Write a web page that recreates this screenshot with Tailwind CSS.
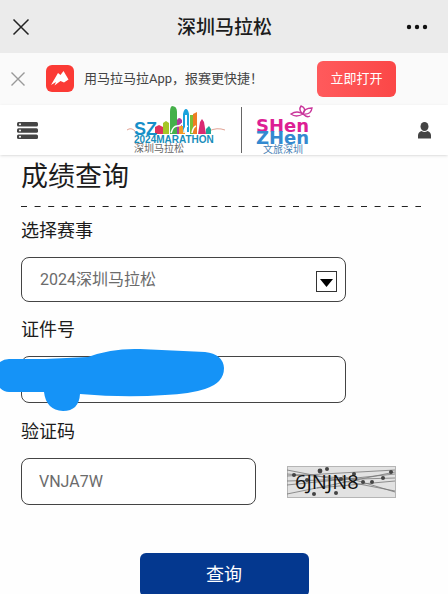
<!DOCTYPE html>
<html lang="zh-CN">
<head>
    <meta charset="UTF-8">
    <meta name="viewport" content="width=device-width, initial-scale=1.0">
    <title>深圳马拉松</title>
    <script src="https://cdn.jsdelivr.net/npm/@tailwindcss/browser@4"></script>
</head>
<body class="bg-[#fefefe] text-[#1c1c1c] font-[Roboto,'Noto_Sans_CJK_SC',sans-serif]">

    <!-- Title bar -->
    <div class="flex items-center justify-between h-[53px] pl-3 pr-[11px] bg-[#ebebeb]">
        <button aria-label="关闭" class="w-10">
            <svg class="w-[18px] h-[18px]" viewBox="0 0 18 18" fill="none" stroke="#222" stroke-width="1.5">
                <path d="M1.5 1.5l15 15M16.5 1.5l-15 15"/>
            </svg>
        </button>
        <h1 class="pt-1 text-[19px] font-medium">深圳马拉松</h1>
        <button aria-label="更多" class="flex justify-center w-10">
            <svg class="w-[22px] h-[6px]" viewBox="0 0 22 6" fill="#111">
                <circle cx="3" cy="3" r="2.2"/><circle cx="11" cy="3" r="2.2"/><circle cx="19" cy="3" r="2.2"/>
            </svg>
        </button>
    </div>

    <!-- App banner -->
    <div class="flex items-center h-[52px] pl-[11px] pr-[52px] bg-[#fafafa]">
        <button aria-label="关闭横幅">
            <svg class="w-[14px] h-[14px]" viewBox="0 0 14 14" fill="none" stroke="#999" stroke-width="1.4">
                <path d="M.5 .5l13 13M13.5 .5l-13 13"/>
            </svg>
        </button>
        <svg class="w-7 h-7 ml-[21px]" viewBox="0 0 28 28">
            <rect width="28" height="27" rx="6" fill="#fb3a35"/>
            <path d="M5 20L12 8L14.500 10L17.500 6L22.500 14.500L18 17.500L14.500 16L8.500 20.500L10 17Z" fill="#fff"/>
        </svg>
        <p class="ml-[10px] text-[13px] text-[#444]">用马拉马拉App，报赛更快捷！</p>
        <button class="w-[79px] h-9 ml-auto rounded-md bg-linear-to-r from-[#ff5a5c] to-[#fb4747] text-[13px] text-white">立即打开</button>
    </div>

    <!-- Site header -->
    <header class="flex items-center justify-between h-[50px] px-[17px] bg-white shadow-sm">
        <button aria-label="菜单" class="w-6">
            <svg class="w-[21px] h-[17px]" viewBox="0 0 21 17">
                <g fill="#444">
                    <rect width="21" height="4.600" rx="1.500"/>
                    <rect y="6.200" width="21" height="4.600" rx="1.500"/>
                    <rect y="12.400" width="21" height="4.600" rx="1.500"/>
                </g>
                <g fill="#fff">
                    <circle cx="3" cy="2.300" r="1"/><circle cx="3" cy="8.500" r="1"/><circle cx="3" cy="14.700" r="1"/>
                </g>
            </svg>
        </button>
        <div class="flex items-center">
            <svg class="w-[100px] h-[50px]" viewBox="0 0 100 50" role="img" aria-label="2024深圳马拉松">
                <path d="M0 25q4-3 8 1M82 26q8-4 16-1" fill="none" stroke="#d98a78" stroke-width=".8"/>
                <!-- Skyline -->
                <path d="M28 29v-7l4-2 4 2v7z" fill="#e0335c"/>
                <path d="M36 29V18l3-2 3 2v11z" fill="#a6c626"/>
                <path d="M43 29V7q0-5 2-6q5 0 5 6v22z" fill="#45b04a"/>
                <path d="M50 29V15q2-4 5 0v14z" fill="#b0399b"/>
                <path d="M52 29v-8h6v8z" fill="#f39a26"/>
                <path d="M56 27V9q1-5 3-5t3 5v18h-2V10h-2v17z" fill="#1aa3dd"/>
                <path d="M63 29V10h3v19z" fill="#7abf35"/>
                <path d="M66 29V9l4-2v22z" fill="#ef7d24"/>
                <path d="M71 29l2-12 2-3 2 3 2 12z" fill="#da2a72"/>
                <path d="M79 29v-5l3-3 2 3v5z" fill="#20a69a"/>
                <path d="M44 28q2-7 6-7t5-3M57 28q0-6 4-7M65 28q1-6 4-7" fill="none" stroke="#fff" stroke-width="1.500"/>
                <text x="7" y="30" fill="#168fc8" class="text-[18px] font-bold font-['Liberation_Sans']">SZ</text>
                <text x="7" y="38" fill="#178dbb" class="text-[10px] font-bold font-['Liberation_Sans']">2024MARATHON</text>
                <text x="7" y="47" fill="#666" class="text-[10px] font-['Noto_Sans_CJK_SC']">深圳马拉松</text>
            </svg>
            <div class="w-px h-[46px] mx-[14px] bg-[#666]"></div>
            <svg class="w-[74px] h-[50px]" viewBox="0 0 74 50" role="img" aria-label="文旅深圳">
                <g fill="none" stroke="#c9369b" stroke-width="1.400">
                    <path d="M47 9q-5-4-2-8q6 2 2 8z"/>
                    <path d="M47 9q1-6 9-6q-1 7-9 6z"/>
                    <path d="M47 9q-7 4-12 0q6-4 12 0zM47 9q4 4 7 2"/>
                </g>
                <text x="0" y="27" fill="#dd1f94" class="text-[18px] font-bold font-['DejaVu_Sans']">SHen</text>
                <text x="0" y="39" fill="#3489d0" class="text-[18px] font-bold font-['DejaVu_Sans']">ZHen</text>
                <text x="7" y="48" fill="#4a7fb5" class="text-[10px] font-['Noto_Sans_CJK_SC']">文旅深圳</text>
            </svg>
        </div>
        <button aria-label="我的" class="flex justify-end w-4">
            <svg class="w-[13px] h-[17px]" viewBox="0 0 13 17" fill="#444">
                <ellipse cx="6.500" cy="4.500" rx="4" ry="4.500"/>
                <path d="M0 16.500v-3q0-3.500 3.500-4.500q3 2 6 0q3.500 1 3.500 4.500v3z"/>
            </svg>
        </button>
    </header>

    <!-- Result query -->
    <main class="px-[21px]">
        <h2 class="pt-1 text-[27px] leading-9">成绩查询</h2>
        <svg class="block w-full h-px mt-[11px]" aria-hidden="true">
            <line x2="400" stroke="#222" stroke-width="3" stroke-dasharray="6 7.600"/>
        </svg>

        <form>
            <label for="race" class="block pt-3 text-lg leading-6">选择赛事</label>
            <div class="relative w-4/5 mt-[14px]">
                <select id="race" class="appearance-none block w-full h-[45px] pl-[18px] border border-[#444] rounded-lg bg-white text-base text-[#6b6b6b]">
                    <option>2024深圳马拉松</option>
                </select>
                <svg class="absolute right-[9px] top-[14px] w-[21px] h-[21px] pointer-events-none" viewBox="0 0 21 21">
                    <rect x=".5" y=".5" width="20" height="20" fill="#fff" stroke="#333"/>
                    <path d="M4 8h13l-6.500 8z" fill="#000"/>
                </svg>
            </div>

            <label for="id-number" class="block mt-4 text-lg leading-6">证件号</label>
            <div class="relative w-4/5 mt-[14px]">
                <input id="id-number" type="text" class="block w-full h-[47px] px-[17px] border border-[#444] rounded-lg bg-white text-base">
                <!-- Marker stroke over the number -->
                <svg class="absolute -left-[21px] -top-[8px] w-[225px] h-[64px] pointer-events-none" viewBox="0 0 225 64">
                    <path d="M0 14Q4 11 9 11L45 11L88 9Q112 0 140 1L205 4Q223 6 224 20Q224 35 205 41Q190 46 165 47Q125 50 80 46Q79 63 63 63Q46 62 44 44L9 44Q4 44 0 40Z" fill="#1593f7"/>
                </svg>
            </div>

            <label for="captcha" class="block mt-[17px] text-lg leading-6">验证码</label>
            <div class="flex items-center mt-[14px]">
                <input id="captcha" type="text" value="VNJA7W" class="w-[235px] h-[47px] px-[17px] border border-[#444] rounded-lg bg-white text-base text-[#6b6b6b]">
                <svg class="w-[109px] h-[32px] ml-[31px]" viewBox="0 0 109 32">
                    <rect x=".5" y=".5" width="108" height="31" fill="#e2e2e2" stroke="#b5b5b5"/>
                    <g stroke="#777" stroke-width=".8">
                        <path d="M0 4L108 25M0 28L108 6M0 10L108 4M0 15L108 12M0 19L108 8M0 8L70 13M30 22L108 15M55 10L108 26"/>
                    </g>
                    <g fill="#444">
                        <circle cx="7" cy="9" r="2"/><circle cx="33" cy="5" r="2.400"/><circle cx="40" cy="3" r="2"/>
                        <circle cx="20" cy="14" r="2"/><circle cx="27" cy="28" r="2"/><circle cx="49" cy="27" r="2"/>
                        <circle cx="67" cy="8" r="2"/><circle cx="76" cy="16" r="2"/><circle cx="85" cy="16" r="2"/>
                        <circle cx="96" cy="12" r="2"/><circle cx="104" cy="6" r="2"/><circle cx="54" cy="13" r="2"/>
                    </g>
                    <text x="8" y="23" fill="#111" class="text-[20px] font-['Open_Sans']">6JNJN8</text>
                </svg>
            </div>

            <button type="submit" class="block w-[169px] h-11 mx-auto mt-12 rounded-md bg-[#04388f] text-lg text-white">查询</button>
        </form>
    </main>

</body>
</html>
